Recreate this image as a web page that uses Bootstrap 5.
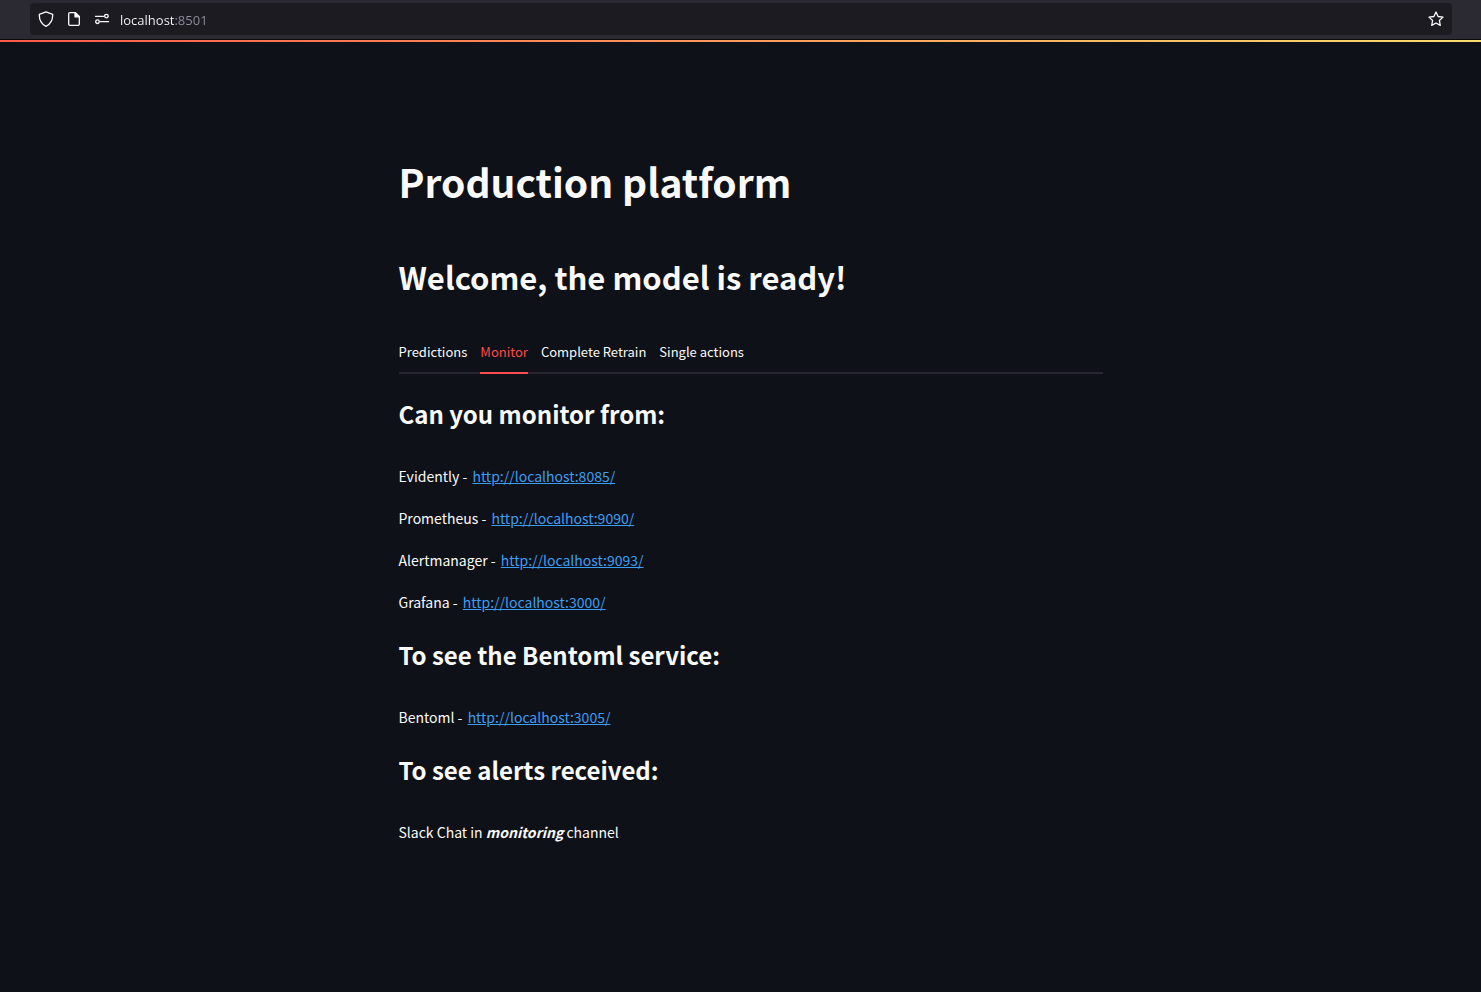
<!DOCTYPE html>
<html lang="en" data-bs-theme="dark">
<head>
<meta charset="utf-8">
<meta name="viewport" content="width=device-width, initial-scale=1">
<title>Production platform</title>
<link href="https://cdn.jsdelivr.net/npm/bootstrap@5.3.0/dist/css/bootstrap.min.css" rel="stylesheet">
<style>
body{background:#0e1117;color:#fafafa;font-family:"Noto Sans CJK SC",sans-serif;font-size:14px;line-height:26px}
.browser-bar{background:#2b2a33;height:40px;padding:3px 29px 4px 30px;border-bottom:1px solid #0c0c0d}
.address{background:#1c1b22;border-radius:4px;gap:12px;padding:0 8px;height:32px}
.address button{color:#fbfbfe;width:16px;height:16px}
.address svg{display:block;width:16px;height:16px;fill:none;stroke:currentColor;stroke-width:1.3;stroke-linejoin:round;stroke-linecap:round}
.address input{border:0;outline:0;padding:2px 0 0;margin-left:-2px;height:26px;font:13px/24px "Open Sans",sans-serif;color:transparent;background:linear-gradient(90deg,#fbfbfe 54px,#8f8f9d 54px) text;-webkit-background-clip:text}
.accent{height:2px;background:linear-gradient(90deg,#ff5a4b,#fadc6e)}
.shell{padding:113px 0 80px 20px}
.page{max-width:704px}
h1,h2,h3{color:#fafafa;font-weight:700}
h1{font-size:39px;line-height:53px;margin-bottom:47px}
h2{font-size:31px;line-height:43px;margin-bottom:33px}
h3{font-size:24px;line-height:34px;margin:23px 0 32px}
p{margin-bottom:16px}
p a{color:#3d9df3;margin-left:2px}
p a:hover{color:#6db6f6}
.tab-row{gap:13px;border-bottom:2px solid #262730}
.tab-row .nav-link{background:none;border:0;padding:0;margin-bottom:-2px;border-bottom:2px solid transparent;border-radius:0;color:#fafafa;font-size:13px;line-height:41px}
.tab-row .nav-link.active{color:#ff4b4b;border-color:#ff4b4b}
</style>
</head>
<body>
<header>
<div class="browser-bar">
<div class="address d-flex align-items-center">
<button type="button" class="btn p-0 border-0" aria-label="Tracking protection"><svg viewBox="0 0 16 16"><path d="M8 .8 14.700 3.300c.2 5.200-1.500 9.500-6.700 12.100C2.800 12.800 1.100 8.500 1.300 3.300z"/></svg></button>
<button type="button" class="btn p-0 border-0" aria-label="Page information"><svg viewBox="0 0 16 16"><path d="M9.500 1.600H4A1.300 1.300 0 0 0 2.700 2.900v10.200A1.300 1.300 0 0 0 4 14.400h8a1.300 1.300 0 0 0 1.300-1.300V5.400z"/><path d="M9 1.600v4.200h4.300z" fill="currentColor"/></svg></button>
<button type="button" class="btn p-0 border-0" aria-label="Permissions"><svg viewBox="0 0 16 16"><path d="M1.500 5.300h8M6.500 10.700h8"/><circle cx="12.400" cy="5.100" r="1.800"/><circle cx="3.500" cy="10.700" r="1.800"/></svg></button>
<input type="text" class="flex-grow-1" value="localhost:8501" aria-label="Address">
<button type="button" class="btn p-0 border-0" aria-label="Bookmark this page"><svg viewBox="0 0 16 16"><path d="m8 1 2.100 4.500 4.900.6-3.600 3.400.9 4.900L8 12l-4.300 2.400.9-4.900L1 6.100l4.900-.6z"/></svg></button>
</div>
</div>
<div class="accent"></div>
</header>
<div class="shell">
<main class="page mx-auto">
<h1>Production platform</h1>
<h2>Welcome, the model is ready!</h2>
<div class="nav tab-row" role="tablist">
<button type="button" class="nav-link" role="tab" aria-selected="false">Predictions</button>
<button type="button" class="nav-link active" role="tab" aria-selected="true">Monitor</button>
<button type="button" class="nav-link" role="tab" aria-selected="false">Complete Retrain</button>
<button type="button" class="nav-link" role="tab" aria-selected="false">Single actions</button>
</div>
<section>
<h3>Can you monitor from:</h3>
<p>Evidently - <a href="http://localhost:8085/">http://localhost:8085/</a></p>
<p>Prometheus - <a href="http://localhost:9090/">http://localhost:9090/</a></p>
<p>Alertmanager - <a href="http://localhost:9093/">http://localhost:9093/</a></p>
<p>Grafana - <a href="http://localhost:3000/">http://localhost:3000/</a></p>
<h3>To see the Bentoml service:</h3>
<p>Bentoml - <a href="http://localhost:3005/">http://localhost:3005/</a></p>
<h3>To see alerts received:</h3>
<p>Slack Chat in <strong><em>monitoring</em></strong> channel</p>
</section>
</main>
</div>
<script src="https://cdn.jsdelivr.net/npm/bootstrap@5.3.0/dist/js/bootstrap.bundle.min.js"></script>
</body>
</html>
